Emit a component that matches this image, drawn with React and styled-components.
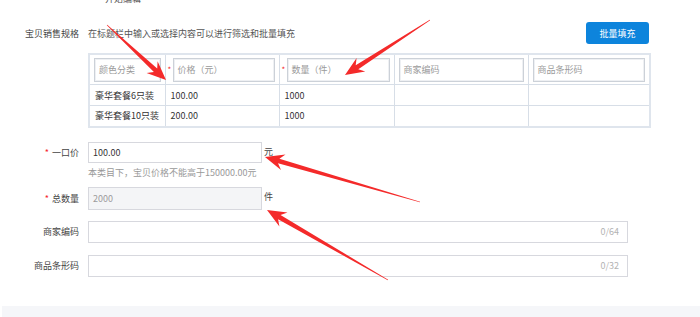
import React from 'react'
import styled, { createGlobalStyle } from 'styled-components'

const GlobalStyle = createGlobalStyle`
  body {
    margin: 0;
    background: #fff;
    font-family: "Noto Sans CJK SC", "Noto Sans", sans-serif;
    color: #333;
  }
`

const Page = styled.div`
  position: relative;
  width: 700px;
  height: 317px;
  overflow: hidden;
`

const TopCut = styled.div`
  height: 6px;
  overflow: hidden;
  padding-left: 105px;
  font-size: 9px;
  color: #555;
  span {
    display: block;
    margin-top: -7px;
    line-height: 12px;
  }
`

const Form = styled.div`
  width: 649px;
`

const SpecRow = styled.div`
  display: flex;
  align-items: center;
  height: 22px;
  margin-top: 16px;
`

const Label = styled.div`
  width: 79px;
  flex: none;
  text-align: right;
  font-size: 9px;
  color: #444;
  white-space: nowrap;
  b {
    color: #f5222d;
    font-weight: normal;
    margin-right: 3px;
  }
`

const Desc = styled.div`
  flex: 1;
  margin-left: 9px;
  font-size: 9px;
  color: #555;
`

const BlueButton = styled.button`
  width: 63px;
  height: 22px;
  border: none;
  border-radius: 3px;
  background: #0d84dc;
  color: #fff;
  font-family: inherit;
  font-size: 9px;
  padding: 0;
`

const SkuTable = styled.table`
  margin: 9px 0 0 88px;
  width: 561px;
  border-collapse: collapse;
  table-layout: fixed;
  border: 2px solid #dfe5ed;
  td {
    border: 1px solid #d7dee7;
    font-size: 9px;
    color: #333;
    padding: 0 0 0 5px;
    white-space: nowrap;
  }
`

const HeadCell = styled.td`
  height: 29px;
  && {
    padding: 0 4px 0 ${p => (p.$req ? '2px' : '4px')};
  }
  div {
    display: flex;
    align-items: center;
  }
  i {
    font-style: normal;
    color: #f5222d;
    width: 4px;
    margin-right: 1px;
    font-size: 8px;
  }
`

const HeadInput = styled.div`
  flex: 1;
  height: 22px;
  border: 1px solid #ccd1d8;
  box-shadow: inset 0 0 0 1px #eef0f3;
  display: flex;
  align-items: center;
  padding-left: 4px;
  color: #9a9a9a;
  font-size: 9px;
`

const BodyRow = styled.tr`
  height: ${p => p.$h}px;
`

const FieldRow = styled.div`
  display: flex;
  align-items: center;
  margin-top: ${p => p.$top}px;
`

const TextBox = styled.div`
  margin-left: 9px;
  width: ${p => p.$w}px;
  height: ${p => p.$h || 21}px;
  box-sizing: border-box;
  border: 1px solid #d7d8de;
  background: ${p => (p.$disabled ? '#f4f5f7' : '#fff')};
  color: ${p => (p.$disabled ? '#9c9c9c' : '#333')};
  display: flex;
  align-items: center;
  justify-content: space-between;
  padding: 0 8px 0 4px;
  font-size: 9px;
  span.count {
    color: #b3b3b3;
  }
`

const Unit = styled.span`
  margin-left: 2px;
  font-size: 9px;
  color: #444;
  align-self: flex-start;
  margin-top: 3px;
`

const Hint = styled.div`
  margin: 3px 0 0 88px;
  font-size: 9px;
  color: #999;
`

const Footer = styled.div`
  margin: 29px 0 0 2px;
  height: 20px;
  background: #f5f6f9;
`

const Overlay = styled.svg`
  position: absolute;
  left: 0;
  top: 0;
  pointer-events: none;
`

const arrowPoints = (tx, ty, px, py, L = 19, W = 8) => {
  const dx = px - tx
  const dy = py - ty
  const len = Math.hypot(dx, dy)
  const ux = dx / len
  const uy = dy / len
  const nx = -uy
  const ny = ux
  const neck = [px - ux * L * 0.75, py - uy * L * 0.75]
  const barb = [px - ux * L, py - uy * L]
  const pts = [
    [tx + nx * 0.3, ty + ny * 0.3],
    [neck[0] + nx * 2.4, neck[1] + ny * 2.4],
    [barb[0] + nx * W, barb[1] + ny * W],
    [px, py],
    [barb[0] - nx * W, barb[1] - ny * W],
    [neck[0] - nx * 2.4, neck[1] - ny * 2.4],
    [tx - nx * 0.3, ty - ny * 0.3],
  ]
  return pts.map(p => p.map(v => v.toFixed(1)).join(',')).join(' ')
}

const arrows = [
  [107, 25, 166, 80],
  [430, 20, 345, 75],
  [420, 202, 265, 157],
  [388, 280, 267, 210],
]

const headers = [
  { text: '颜色分类' },
  { text: '价格（元）', req: true },
  { text: '数量（件）', req: true },
  { text: '商家编码' },
  { text: '商品条形码' },
]

const rows = [
  { name: '豪华套餐6只装', price: '100.00', qty: '1000', h: 21 },
  { name: '豪华套餐10只装', price: '200.00', qty: '1000', h: 21 },
]

const App = () => {
  return (
    <Page>
      <GlobalStyle />
      <TopCut><span>开始编辑</span></TopCut>
      <Form>
        <SpecRow>
          <Label>宝贝销售规格</Label>
          <Desc>在标题栏中输入或选择内容可以进行筛选和批量填充</Desc>
          <BlueButton>批量填充</BlueButton>
        </SpecRow>
        <SkuTable>
          <colgroup>
            <col style={{ width: 76 }} />
            <col style={{ width: 114 }} />
            <col style={{ width: 115 }} />
            <col style={{ width: 134 }} />
            <col style={{ width: 122 }} />
          </colgroup>
          <tbody>
            <tr>
              {headers.map(h => (
                <HeadCell key={h.text} $req={h.req}>
                  <div>
                    {h.req && <i>*</i>}
                    <HeadInput>{h.text}</HeadInput>
                  </div>
                </HeadCell>
              ))}
            </tr>
            {rows.map(r => (
              <BodyRow key={r.name} $h={r.h}>
                <td>{r.name}</td>
                <td>{r.price}</td>
                <td>{r.qty}</td>
                <td></td>
                <td></td>
              </BodyRow>
            ))}
          </tbody>
        </SkuTable>
        <FieldRow $top={14}>
          <Label><b>*</b>一口价</Label>
          <TextBox $w={174}>100.00</TextBox>
          <Unit>元</Unit>
        </FieldRow>
        <Hint>本类目下，宝贝价格不能高于150000.00元</Hint>
        <FieldRow $top={8}>
          <Label><b>*</b>总数量</Label>
          <TextBox $w={174} $h={23} $disabled>2000</TextBox>
          <Unit>件</Unit>
        </FieldRow>
        <FieldRow $top={11}>
          <Label>商家编码</Label>
          <TextBox $w={540} $h={22}><span /><span className="count">0/64</span></TextBox>
        </FieldRow>
        <FieldRow $top={12}>
          <Label>商品条形码</Label>
          <TextBox $w={540} $h={22}><span /><span className="count">0/32</span></TextBox>
        </FieldRow>
      </Form>
      <Footer />
      <Overlay width="700" height="317">
        {arrows.map((a, i) => (
          <polygon key={i} points={arrowPoints(...a)} fill="#f42a2a" />
        ))}
      </Overlay>
    </Page>
  )
}

export default App
